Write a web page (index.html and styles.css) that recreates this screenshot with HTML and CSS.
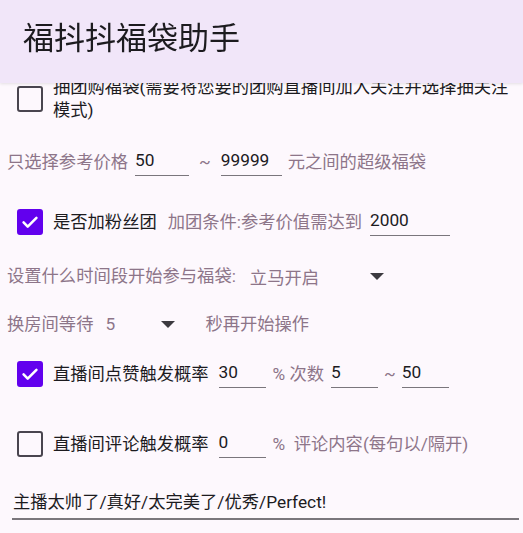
FILE: index.html
```html
<!DOCTYPE html>
<html lang="zh">
<head>
<meta charset="utf-8">
<title>福抖抖福袋助手</title>
<link rel="stylesheet" href="styles.css">
</head>
<body>
<header class="appbar">
  <h1 class="appbar-title">福抖抖福袋助手</h1>
</header>
<main class="form">
  <div class="row row-group">
    <span class="checkbox"></span>
    <span class="text dark multi">抽团购福袋(需要将您要的团购直播间加入关注并选择抽关注<br>模式)</span>
  </div>

  <div class="row row-price plain">
    <span class="text">只选择参考价格</span>
    <span class="field w54 ml7">50</span>
    <span class="text tilde">~</span>
    <span class="field w61">99999</span>
    <span class="text ml6">元之间的超级福袋</span>
  </div>

  <div class="row row-fans">
    <span class="checkbox checked"><svg viewBox="0 0 24 24" width="22" height="22"><path d="M5 12.5l4.5 4.5L19 7.5" fill="none" stroke="#fff" stroke-width="2.8" stroke-linecap="round" stroke-linejoin="round"/></svg></span>
    <span class="text dark">是否加粉丝团</span>
    <span class="text ml11">加团条件:参考价值需达到</span>
    <span class="field w80 ml8">2000</span>
  </div>

  <div class="row row-time plain">
    <span class="text">设置什么时间段开始参与福袋:</span>
    <span class="spinner sp-time"><span class="spinner-value">立马开启</span><span class="arrow"></span></span>
  </div>

  <div class="row row-wait plain">
    <span class="text">换房间等待</span>
    <span class="spinner sp-wait"><span class="spinner-value">5</span><span class="arrow"></span></span>
    <span class="text">秒再开始操作</span>
  </div>

  <div class="row row-like">
    <span class="checkbox checked"><svg viewBox="0 0 24 24" width="22" height="22"><path d="M5 12.5l4.5 4.5L19 7.5" fill="none" stroke="#fff" stroke-width="2.8" stroke-linecap="round" stroke-linejoin="round"/></svg></span>
    <span class="text dark">直播间点赞触发概率</span>
    <span class="field w47 ml10">30</span>
    <span class="text ml7">% 次数</span>
    <span class="field w47 ml7">5</span>
    <span class="text tilde tight">~</span>
    <span class="field w47">50</span>
  </div>

  <div class="row row-comment">
    <span class="checkbox"></span>
    <span class="text dark">直播间评论触发概率</span>
    <span class="field w47 ml10">0</span>
    <span class="text ml7">% &nbsp;评论内容(每句以/隔开)</span>
  </div>

  <div class="comment-box">主播太帅了/真好/太完美了/优秀/Perfect!</div>
</main>
</body>
</html>
```
FILE: styles.css
```css
html, body {
  margin: 0;
  padding: 0;
  height: 100%;
  overflow: hidden;
  background: #fdf8fd;
  font-family: Roboto, "Noto Sans CJK SC", sans-serif;
  color: #1c1b1f;
}

.appbar {
  position: fixed;
  top: 0;
  left: 0;
  right: 0;
  height: 83px;
  background: #f1e6f9;
  box-shadow: 0 1px 3px rgba(0, 0, 0, 0.10);
  z-index: 2;
  display: flex;
  align-items: center;
}

.appbar-title {
  margin: 0 0 0 23px;
  font-size: 31px;
  font-weight: 400;
  color: #1c1b1f;
  line-height: 1;
  padding-bottom: 7px;
}

.form {
  padding-top: 76px;
  display: flex;
  flex-direction: column;
}

.row {
  display: flex;
  align-items: center;
  height: 48px;
  white-space: nowrap;
  font-size: 17.3px;
}

.plain {
  padding-left: 7px;
}

.row-group { height: 46px; padding-left: 17px; }
.row-price { margin-top: 16px; }
.row-fans { margin-top: 12px; padding-left: 17px; }
.row-time { margin-top: 6px; }
.row-wait { margin-top: 0; }
.row-like { margin-top: 2px; padding-left: 17px; }
.row-comment { margin-top: 22px; padding-left: 17px; }

.text {
  color: #8d7589;
  line-height: 23px;
}

.text.dark {
  color: #1c1b1f;
}

.multi {
  white-space: nowrap;
}

.checkbox {
  flex: none;
  box-sizing: border-box;
  width: 26px;
  height: 26px;
  border: 2.6px solid #49454f;
  border-radius: 3px;
  margin-right: 10px;
  display: flex;
  align-items: center;
  justify-content: center;
}

.checkbox.checked {
  background: #6200ee;
  border-color: #6200ee;
}

.field {
  flex: none;
  box-sizing: border-box;
  height: 28px;
  line-height: 24px;
  border-bottom: 1.6px solid #7a767c;
  color: #1c1b1f;
  font-size: 17.3px;
}

.w47 { width: 47px; }
.w54 { width: 54px; }
.w61 { width: 61px; }
.w80 { width: 80px; }

.ml6 { margin-left: 6px; }
.ml7 { margin-left: 7px; }
.ml8 { margin-left: 8px; }
.ml10 { margin-left: 10px; }
.ml11 { margin-left: 11px; }

.tilde {
  margin: 0 10px;
}

.tilde.tight {
  margin: 0 6px;
}

.spinner {
  display: flex;
  align-items: center;
  flex: none;
}

.spinner-value {
  color: #8d7589;
}

.sp-time {
  margin-left: 14px;
  width: 144px;
}

.sp-time .spinner-value { width: 120px; }

.sp-wait {
  margin-left: 12px;
  width: 100px;
}

.sp-wait .spinner-value { width: 56px; }

.arrow {
  width: 0;
  height: 0;
  border-left: 7px solid transparent;
  border-right: 7px solid transparent;
  border-top: 7px solid #3c3a40;
}

.comment-box {
  margin: 22px 4px 0 12px;
  padding: 0 0 4px 1px;
  font-size: 17.3px;
  line-height: 24px;
  color: #1c1b1f;
  border-bottom: 2px solid #7a767c;
}
```
